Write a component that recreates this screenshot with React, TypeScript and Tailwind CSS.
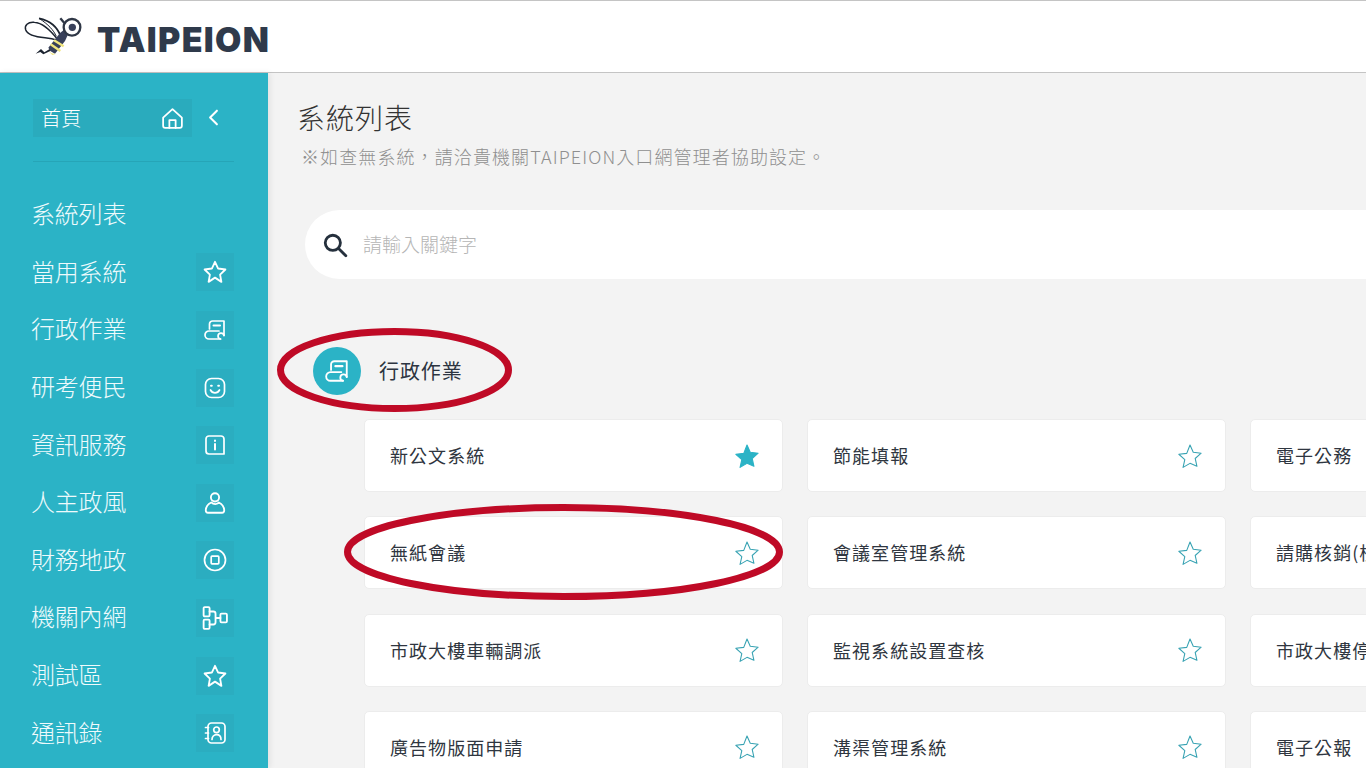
import React from "react";

const FONT = '"Noto Sans CJK TC", "Noto Sans", sans-serif';

type IconProps = { className?: string };
const base = {
  fill: "none",
  stroke: "currentColor",
  strokeWidth: 1.7,
  strokeLinecap: "round" as const,
  strokeLinejoin: "round" as const,
  viewBox: "0 0 24 24",
};

const StarOutline = ({ className }: IconProps) => (
  <svg {...base} className={className}>
    <path d="M12 2.600l2.900 6.200 6.700.9-4.900 4.700 1.200 6.700L12 17.200l-5.900 3.900 1.200-6.700-4.900-4.700 6.700-.9z" />
  </svg>
);
const Scroll = ({ className }: IconProps) => (
  <svg {...base} className={className}>
    <path d="M6.500 11V6a3 3 0 0 1 3-3H21v14.500" />
    <path d="M16 13H6a4 4 0 0 0 0 8h11.500" />
    <path d="M17.500 21a3 3 0 1 1 3.500-3.500" />
    <path d="M10.500 7.500h6.500" strokeWidth="2" />
  </svg>
);
const Smile = ({ className }: IconProps) => (
  <svg {...base} className={className}>
    <rect x="2.500" y="2.500" width="19" height="19" rx="6" />
    <path d="M7.500 14c1 1.900 2.600 2.800 4.500 2.800s3.500-.9 4.500-2.800" />
    <path d="M8 9.800h.8M15.200 9.800h.8" strokeWidth="2" />
  </svg>
);
const Info = ({ className }: IconProps) => (
  <svg {...base} className={className}>
    <path d="M21 21V6a3 3 0 0 0-3-3H6a3 3 0 0 0-3 3v12a3 3 0 0 0 3 3h15" />
    <path d="M12 11v5.500M12 7.600v.3" strokeWidth="2" />
  </svg>
);
const Person = ({ className }: IconProps) => (
  <svg {...base} className={className}>
    <circle cx="12" cy="6.800" r="3.800" />
    <path d="M8.500 11.500C5.500 13 3.500 16 3.500 19a2 2 0 0 0 2 2h13a2 2 0 0 0 2-2c0-3-2-6-5-7.500-1 2-5 2-7 0z" />
  </svg>
);
const Target = ({ className }: IconProps) => (
  <svg {...base} className={className}>
    <circle cx="12" cy="12" r="10.500" />
    <rect x="8.200" y="8.200" width="7.600" height="7.600" rx="0.800" />
  </svg>
);
const Org = ({ className }: IconProps) => (
  <svg {...base} className={className}>
    <rect x="1.500" y="2" width="5.500" height="8.500" rx="1" />
    <rect x="1.500" y="13.500" width="5.500" height="8.500" rx="1" />
    <rect x="17" y="8" width="6" height="8" rx="1" />
    <path d="M7 6h3.500a2 2 0 0 1 2 2v8a2 2 0 0 1-2 2H7M12.500 12H17" />
  </svg>
);
const Contact = ({ className }: IconProps) => (
  <svg {...base} className={className}>
    <rect x="5" y="2" width="17" height="20" rx="3.500" />
    <circle cx="13.500" cy="8.800" r="2.800" />
    <path d="M9 18.500c0-3 2-4.800 4.500-4.800s4.500 1.800 4.500 4.800" />
    <path d="M2.500 6.500h3M2.500 12h3M2.500 17.500h3" />
  </svg>
);
const Home = ({ className }: IconProps) => (
  <svg {...base} className={className}>
    <path d="M3 11.200 12 3l9 8.200V19a2 2 0 0 1-2 2H5a2 2 0 0 1-2-2z" />
    <path d="M9 21v-7.500h6V21" />
  </svg>
);

const Logo = () => (
  <svg viewBox="0 0 270 180" className="mb-[3px] h-[60px] w-[90px] shrink-0">
    <path d="M128 104C108 78 84 54 58 52 38 50 28 62 32 74c6 16 34 22 58 24 14 1 28 4 38 8z" fill="#fff" stroke="#1c2430" strokeWidth="4.500" />
    <path d="M136 92C128 68 106 46 72 40" fill="none" stroke="#1c2430" strokeWidth="5" />
    <path d="M72 40C100 58 116 76 124 94" fill="none" stroke="#1c2430" strokeWidth="3" />
    <path d="M150 72 135 84 100 128 106 138 120 146 150 108 160 86z" fill="#38405a" />
    <path d="M107 118 136 138" stroke="#f1e57e" strokeWidth="7" />
    <path d="M117 106 146 124" stroke="#f1e57e" strokeWidth="7" />
    <path d="M100 138 110 145 122 147 112 150z" fill="#f1e57e" />
    <circle cx="171" cy="67" r="25" fill="#fff" stroke="#2f3746" strokeWidth="7" />
    <circle cx="172" cy="67" r="11" fill="#38405a" />
    <path d="M136 40 148 54" stroke="#2f3746" strokeWidth="7" />
    <path d="M104 132 88 142 78 132 62 146 76 141 85 148 106 138z" fill="#1c2430" />
  </svg>
);

const nav: { label: string; Icon: React.FC<IconProps> | null; size?: string }[] = [
  { label: "系統列表", Icon: null },
  { label: "當用系統", Icon: StarOutline, size: "h-[26px] w-[26px]" },
  { label: "行政作業", Icon: Scroll },
  { label: "研考便民", Icon: Smile },
  { label: "資訊服務", Icon: Info },
  { label: "人主政風", Icon: Person, size: "h-[26px] w-[26px]" },
  { label: "財務地政", Icon: Target },
  { label: "機關內網", Icon: Org, size: "h-[26px] w-[26px]" },
  { label: "測試區", Icon: StarOutline, size: "h-[26px] w-[26px]" },
  { label: "通訊錄", Icon: Contact },
];

const cards: { t: string; on?: boolean }[] = [
  { t: "新公文系統", on: true },
  { t: "節能填報" },
  { t: "電子公務" },
  { t: "無紙會議" },
  { t: "會議室管理系統" },
  { t: "請購核銷(核銷)" },
  { t: "市政大樓車輛調派" },
  { t: "監視系統設置查核" },
  { t: "市政大樓停車" },
  { t: "廣告物版面申請" },
  { t: "溝渠管理系統" },
  { t: "電子公報" },
];

export default function App() {
  return (
    <div className="relative h-[768px] w-[1366px] overflow-hidden bg-[#f3f3f3]" style={{ fontFamily: FONT }}>
      <header className="flex h-[73px] items-center border-y border-y-[#c4c4c4] bg-white pl-[15px]">
        <Logo />
        <span
          className="-ml-[8px] mt-[7px] text-[34px] font-black leading-none tracking-[1.300px] text-[#2f3a4b]"
          style={{ fontFamily: '"Inter", sans-serif' }}
        >
          TAIPEION
        </span>
      </header>

      <div className="flex h-[695px]">
        <aside className="relative z-10 w-[268px] shrink-0 bg-[#2bb3c6] pl-[33px] pr-[34px] pt-[26px] shadow-[2px_0_6px_rgba(0,0,0,0.08)]">
          <div className="flex items-center">
            <div className="flex h-[38px] w-[159px] items-center justify-between bg-[#2aabbd] pl-[8px] pr-[7px] text-white">
              <span className="text-[20px] font-light leading-none tracking-[0.2px]">首頁</span>
              <Home className="h-[25px] w-[25px]" />
            </div>
            <svg viewBox="0 0 12 20" className="mb-[1px] ml-[16px] h-[17px] w-[11px]" fill="none" stroke="#fff" strokeWidth="2.400" strokeLinecap="round" strokeLinejoin="round">
              <path d="M10 2 2 10l8 8" />
            </svg>
          </div>
          <div className="mt-[24px] h-px bg-[#26a5b7]" />
          <nav className="-ml-[2px] mt-[24px] flex flex-col">
            {nav.map(({ label, Icon, size }) => (
              <div key={label} className="flex h-[57.600px] items-center justify-between text-white">
                <span className="pb-[3px] text-[24px] font-light leading-none tracking-[-0.2px] text-[#eefafc]">{label}</span>
                {Icon ? (
                  <span className="flex h-[38px] w-[38px] items-center justify-center bg-[#2badc0]">
                    <Icon className={size ?? "h-[24px] w-[24px]"} />
                  </span>
                ) : null}
              </div>
            ))}
          </nav>
        </aside>

        <main className="min-w-0 flex-1 overflow-hidden pt-[26px]">
          <h1 className="ml-[29px] text-[28px] font-light leading-[36px] tracking-[1px] text-[#333]">系統列表</h1>
          <p className="ml-[33px] mt-[7px] whitespace-nowrap text-[18px] font-light leading-[28px] tracking-[1.100px] text-[#8f8f8f]">
            ※如查無系統，請洽貴機關TAIPEION入口網管理者協助設定。
          </p>
          <div className="ml-[37px] mt-[40px] flex h-[69px] items-center rounded-l-[35px] bg-white pl-[17px]">
            <svg viewBox="0 0 24 24" className="h-[26px] w-[26px]" fill="none" stroke="#25303d" strokeWidth="2.600" strokeLinecap="round">
              <circle cx="10" cy="10" r="7" />
              <path d="m15.500 15.500 6.500 6.500" />
            </svg>
            <span className="ml-[15px] text-[19px] font-light tracking-[0px] text-[#b5b5b5]">請輸入關鍵字</span>
          </div>

          <div className="ml-[45px] mt-[68px] flex items-center">
            <span className="flex h-[48px] w-[48px] items-center justify-center rounded-full bg-[#2bb3c6] text-white">
              <Scroll className="h-[26px] w-[26px]" />
            </span>
            <h2 className="ml-[18px] text-[20px] font-normal leading-none tracking-[0.900px] text-[#2c3440]">行政作業</h2>
          </div>

          <div className="ml-[96px] mt-[24px] grid w-[1300px] grid-cols-[419px_419px_419px] gap-x-[24px] gap-y-[24.300px]">
            {cards.map((c) => (
              <div key={c.t} className="flex h-[73px] items-center justify-between rounded-[5px] border border-[#ececec] bg-white pl-[25px] pr-[22px]">
                <span className="mb-[1px] whitespace-nowrap text-[18px] leading-none tracking-[1.050px] text-[#2f3640]">{c.t}</span>
                <svg viewBox="0 0 24 24" className="h-[26px] w-[26px]" fill={c.on ? "#2bb3c6" : "none"} stroke={c.on ? "#2bb3c6" : "#38a3b3"} strokeWidth="1" strokeLinejoin="round">
                  <path d="M12 1.800l3 6.800 7.300.8-5.500 4.900 1.600 7.200L12 18.800l-6.400 3.700 1.600-7.200-5.500-4.900 7.300-.8z" />
                </svg>
              </div>
            ))}
          </div>
        </main>
      </div>

      <svg className="pointer-events-none absolute left-0 top-0 z-20 h-[768px] w-[1366px]" viewBox="0 0 1366 768" fill="none" stroke="#bf0a26" strokeWidth="7">
        <ellipse cx="394.500" cy="370" rx="114" ry="38.500" />
        <ellipse cx="563.500" cy="552" rx="216" ry="44.500" />
      </svg>
    </div>
  );
}
